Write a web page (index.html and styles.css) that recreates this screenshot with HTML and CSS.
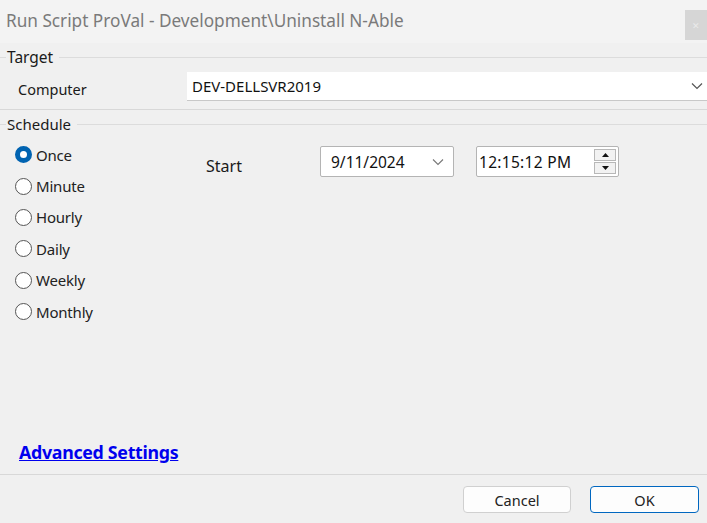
FILE: index.html
```html
<!DOCTYPE html>
<html>
<head>
<meta charset="utf-8">
<link rel="stylesheet" href="styles.css">
</head>
<body>
<div class="window">
  <div class="titlebar">
    <span class="title">Run Script ProVal - Development\Uninstall N-Able</span>
    <span class="close">✕</span>
  </div>
  <div class="group target">
    <div class="legend"><span>Target</span></div>
    <div class="row computer">
      <span class="label">Computer</span>
      <div class="combo">
        <span>DEV-DELLSVR2019</span>
        <svg class="chev" width="12" height="8" viewBox="0 0 12 8"><path d="M1 1.5 L6 6.5 L11 1.5" fill="none" stroke="#555" stroke-width="1.2"/></svg>
      </div>
    </div>
  </div>
  <div class="group schedule">
    <div class="legend"><span>Schedule</span></div>
    <div class="sched-body">
      <div class="radios">
        <label class="radio checked"><span class="dot"></span>Once</label>
        <label class="radio"><span class="dot"></span>Minute</label>
        <label class="radio"><span class="dot"></span>Hourly</label>
        <label class="radio"><span class="dot"></span>Daily</label>
        <label class="radio"><span class="dot"></span>Weekly</label>
        <label class="radio"><span class="dot"></span>Monthly</label>
      </div>
      <div class="start">
        <span class="start-label">Start</span>
        <div class="date">
          <span>9/11/2024</span>
          <svg class="chev" width="12" height="8" viewBox="0 0 12 8"><path d="M1 1.5 L6 6.5 L11 1.5" fill="none" stroke="#777" stroke-width="1.1"/></svg>
        </div>
        <div class="time">
          <span>12:15:12 PM</span>
          <div class="spin">
            <span class="up"><svg width="7" height="4" viewBox="0 0 7 4"><path d="M0 4 L3.5 0 L7 4Z" fill="#111"/></svg></span>
            <span class="down"><svg width="7" height="4" viewBox="0 0 7 4"><path d="M0 0 L3.5 4 L7 0Z" fill="#111"/></svg></span>
          </div>
        </div>
      </div>
    </div>
    <div class="adv"><a href="#">Advanced Settings</a></div>
  </div>
  <div class="footer">
    <button class="btn">Cancel</button>
    <button class="btn ok">OK</button>
  </div>
</div>
</body>
</html>
```
FILE: styles.css
```css
html, body {
  margin: 0;
  padding: 0;
}
body {
  width: 707px;
  height: 523px;
  overflow: hidden;
  background: #f0f0f0;
  font-family: "Noto Sans", "Open Sans", sans-serif;
  color: #1a1a1a;
}
.window {
  display: flex;
  flex-direction: column;
  height: 523px;
}
.titlebar {
  height: 43px;
  background: #f3f3f3;
  display: flex;
  align-items: center;
  justify-content: space-between;
  box-sizing: border-box;
}
.title {
  font-size: 17.2px;
  color: #7a7a7a;
  padding-left: 6px;
  margin-top: -2px;
}
.close {
  width: 22px;
  height: 30px;
  margin-top: 7px;
  background: #d6d6d6;
  color: #eaeaea;
  font-size: 9px;
  display: flex;
  align-items: center;
  justify-content: center;
}
.legend {
  display: flex;
  align-items: center;
  height: 18px;
  font-size: 15.5px;
}
.legend::before {
  content: "";
  width: 6px;
  border-top: 1px solid #dcdcdc;
}
.legend::after {
  content: "";
  flex: 1;
  border-top: 1px solid #dcdcdc;
  margin-left: 6px;
}
.legend span {
  padding-left: 1px;
}
.schedule .legend {
  font-size: 15px;
}
.target {
  padding-top: 5px;
  height: 67px;
  box-sizing: border-box;
  border-bottom: 1px solid #d8d8d8;
}
.computer {
  display: flex;
  align-items: center;
  margin-top: 6px;
}
.computer .label {
  width: 169px;
  padding-left: 18px;
  font-size: 14.5px;
  padding-top: 4px;
}
.combo {
  flex: 1;
  height: 29px;
  background: #fff;
  border-bottom: 1px solid #c8c8c8;
  display: flex;
  align-items: center;
  justify-content: space-between;
  padding: 0 4px 0 5px;
  box-sizing: border-box;
  font-size: 15px;
  color: #111;
}
.schedule {
  flex: 1;
  padding-top: 5px;
  display: flex;
  flex-direction: column;
  border-bottom: 1px solid #d8d8d8;
}
.sched-body {
  display: flex;
  flex: 1;
}
.radios {
  display: flex;
  flex-direction: column;
  padding-left: 15px;
  padding-top: 6px;
  width: 206px;
  box-sizing: border-box;
}
.radio {
  display: flex;
  align-items: center;
  height: 31.4px;
  font-size: 15px;
  color: #222;
  letter-spacing: -0.2px;
}
.dot {
  width: 17px;
  height: 17px;
  border: 1.3px solid #555;
  border-radius: 50%;
  box-sizing: border-box;
  margin-right: 4px;
  background: #fff;
}
.radio.checked .dot {
  border: 5px solid #0063b1;
  background: #fff;
}
.start {
  display: flex;
  align-items: flex-start;
  padding-top: 13px;
}
.start-label {
  width: 114px;
  font-size: 16px;
  padding-top: 9px;
}
.date, .time {
  height: 31px;
  box-sizing: border-box;
  border: 1px solid #b4b4b4;
  border-radius: 2px;
  background: #fff;
  display: flex;
  align-items: center;
  font-size: 15.5px;
  color: #111;
}
.date {
  width: 134px;
  padding: 0 9px 0 10px;
  justify-content: space-between;
}
.time {
  width: 143px;
  margin-left: 22px;
  padding: 0 2px 0 2px;
  justify-content: space-between;
  letter-spacing: 0.3px;
}
.spin {
  display: flex;
  flex-direction: column;
  gap: 1px;
}
.spin span {
  width: 20px;
  height: 10px;
  border: 1px solid #b8b8b8;
  background: #f2f2f2;
  display: flex;
  align-items: center;
  justify-content: center;
}
.adv {
  height: 34px;
  padding-top: 7px;
  padding-left: 19px;
  font-size: 17.8px;
  font-weight: bold;
  line-height: 24px;
}
.adv a {
  color: #0000ee;
  letter-spacing: -0.3px;
}
.footer {
  height: 48px;
  display: flex;
  justify-content: flex-end;
  align-items: flex-start;
  padding-top: 11px;
  padding-right: 8px;
  box-sizing: border-box;
  gap: 19px;
}
.btn {
  width: 108px;
  height: 27px;
  background: #fdfdfd;
  border: 1px solid #d0d0d0;
  border-radius: 4px;
  font-family: "Noto Sans", sans-serif;
  font-size: 14.5px;
  color: #222;
  padding: 0;
}
.btn.ok {
  width: 109px;
  border-color: #0067c0;
}
```
